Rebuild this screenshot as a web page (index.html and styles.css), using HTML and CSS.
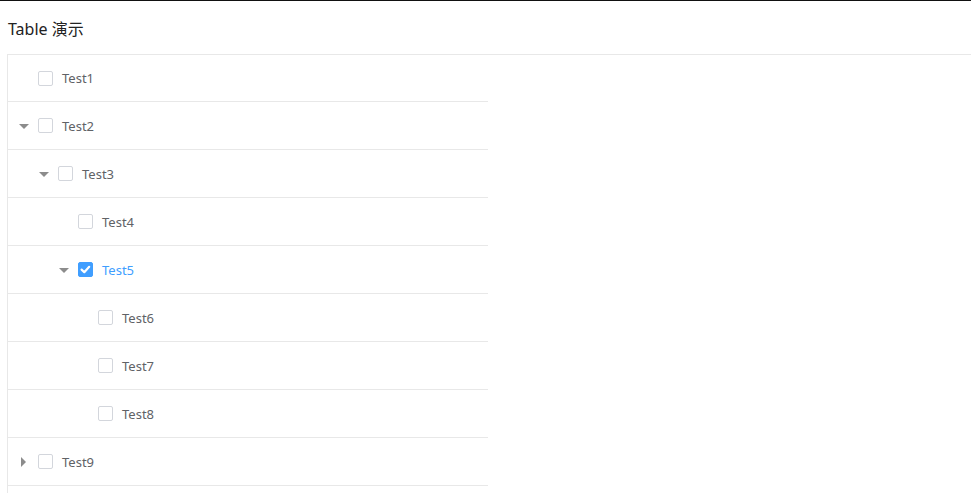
FILE: index.html
```html
<!DOCTYPE html>
<html lang="zh">
<head>
<meta charset="utf-8">
<title>Table 演示</title>
<link rel="stylesheet" href="styles.css">
</head>
<body>
<div class="topline"></div>
<h1 class="title">Table 演示</h1>
<div class="table">
  <div class="row lv0 first"><span class="caret none"></span><span class="cb"></span><span class="label">Test1</span></div>
  <div class="row lv0"><span class="caret down"></span><span class="cb"></span><span class="label">Test2</span></div>
  <div class="row lv1"><span class="caret down"></span><span class="cb"></span><span class="label">Test3</span></div>
  <div class="row lv2"><span class="caret none"></span><span class="cb"></span><span class="label">Test4</span></div>
  <div class="row lv2 checked"><span class="caret down"></span><span class="cb"><svg viewBox="0 0 15 15" width="15" height="15"><path d="M3.6 7.6 L6.3 10.2 L11.2 4.8" fill="none" stroke="#fff" stroke-width="2.2" stroke-linecap="round" stroke-linejoin="round"/></svg></span><span class="label">Test5</span></div>
  <div class="row lv3"><span class="caret none"></span><span class="cb"></span><span class="label">Test6</span></div>
  <div class="row lv3"><span class="caret none"></span><span class="cb"></span><span class="label">Test7</span></div>
  <div class="row lv3"><span class="caret none"></span><span class="cb"></span><span class="label">Test8</span></div>
  <div class="row lv0"><span class="caret right"></span><span class="cb"></span><span class="label">Test9</span></div>
  <div class="row lv0"></div>
</div>
</body>
</html>
```
FILE: styles.css
```css
html, body {
  margin: 0;
  padding: 0;
  background: #fff;
  font-family: "Noto Sans", "Noto Sans CJK SC", sans-serif;
  overflow: hidden;
}
.topline {
  height: 1px;
  background: #111;
}
.title {
  margin: 0;
  height: 53px;
  display: flex;
  align-items: center;
  padding-left: 8px;
  font-size: 16px;
  font-weight: 400;
  color: #222;
}
.table {
  margin-left: 7px;
  border-top: 1px solid #e8e8e8;
  border-left: 1px solid #e8e8e8;
}
.row {
  width: 480px;
  height: 48px;
  box-sizing: border-box;
  border-bottom: 1px solid #e8e8e8;
  display: flex;
  align-items: center;
}
.row.first { height: 47px; }
.lv0 { padding-left: 0; }
.lv1 { padding-left: 20px; }
.lv2 { padding-left: 40px; }
.lv3 { padding-left: 60px; }
.caret {
  width: 30px;
  height: 14px;
  position: relative;
  flex: none;
}
.caret.down::before {
  content: "";
  position: absolute;
  left: 11px;
  top: 5px;
  border-left: 5px solid transparent;
  border-right: 5px solid transparent;
  border-top: 5px solid #8c8c8c;
}
.caret.right::before {
  content: "";
  position: absolute;
  left: 13px;
  top: 2px;
  border-top: 5px solid transparent;
  border-bottom: 5px solid transparent;
  border-left: 5px solid #8c8c8c;
}
.cb {
  width: 15px;
  height: 15px;
  border: 1px solid #d3d6dc;
  border-radius: 2px;
  box-sizing: border-box;
  flex: none;
  margin-right: 9px;
  display: flex;
  align-items: center;
  justify-content: center;
}
.checked .cb {
  background: #409eff;
  border-color: #409eff;
}
.cb svg { display: block; flex: none; }
.label {
  font-size: 13px;
  color: #606266;
}
.checked .label { color: #409eff; }
```
